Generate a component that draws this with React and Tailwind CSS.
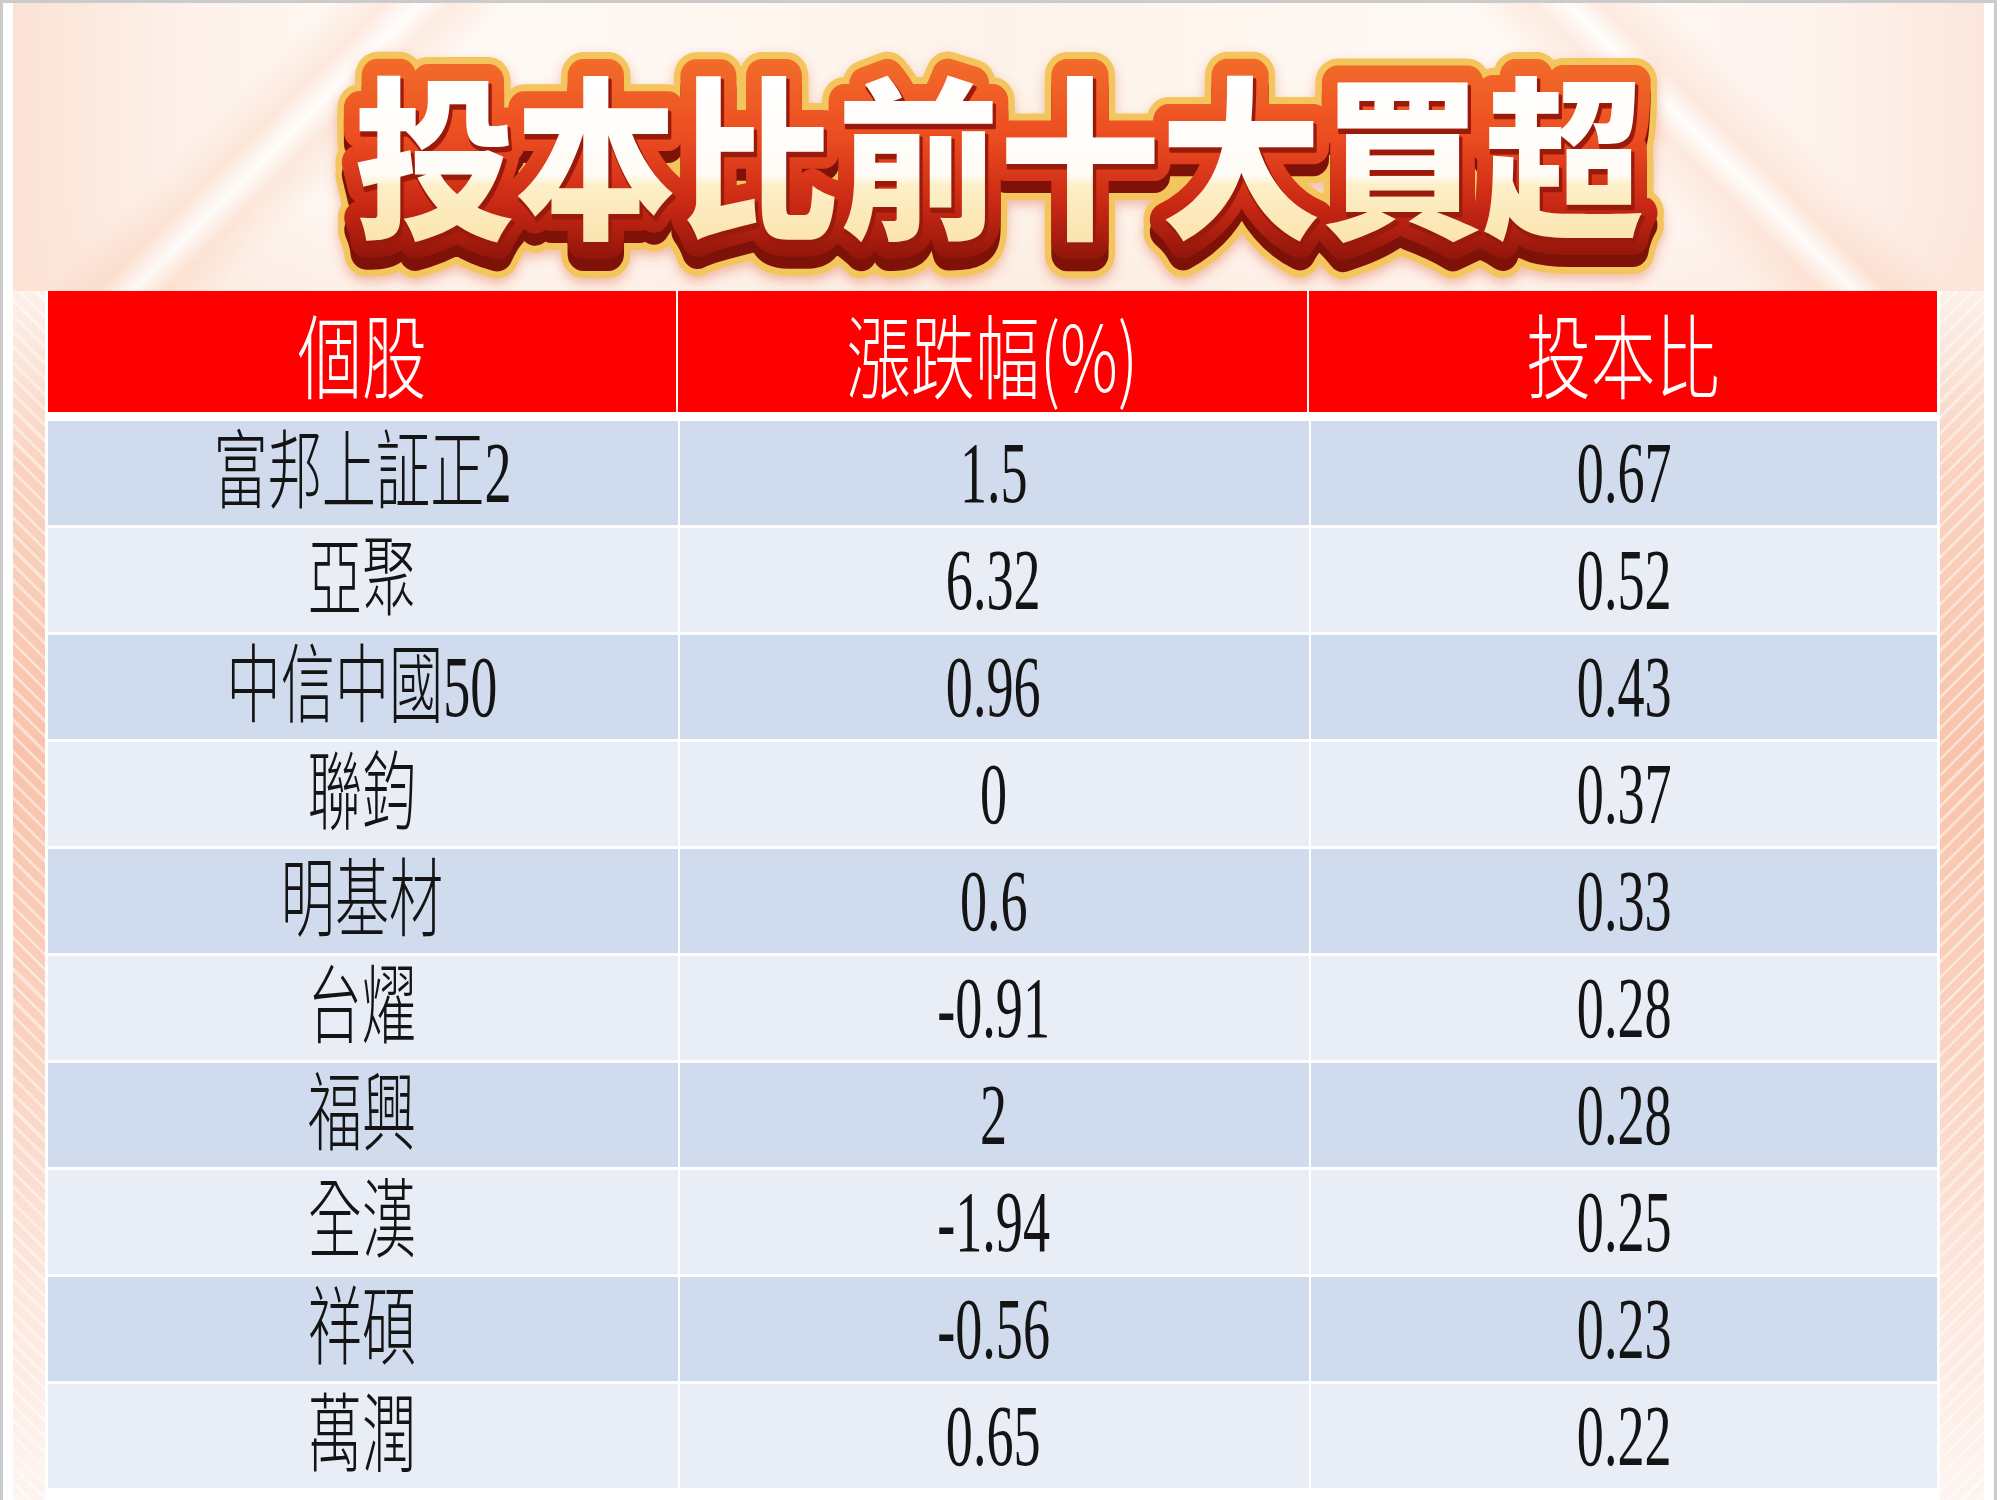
import React from "react";

const rows = [
  ["富邦上証正2", "1.5", "0.67"],
  ["亞聚", "6.32", "0.52"],
  ["中信中國50", "0.96", "0.43"],
  ["聯鈞", "0", "0.37"],
  ["明基材", "0.6", "0.33"],
  ["台燿", "-0.91", "0.28"],
  ["福興", "2", "0.28"],
  ["全漢", "-1.94", "0.25"],
  ["祥碩", "-0.56", "0.23"],
  ["萬潤", "0.65", "0.22"],
];

const TITLE = "投本比前十大買超";

const TitleText = ({ dy = 0, dx = 0, ...rest }) => (
  <text
    x={40 + dx}
    y={205 + dy}
    textLength="1290"
    lengthAdjust="spacingAndGlyphs"
    strokeLinejoin="round"
    {...rest}
  >
    {TITLE}
  </text>
);

const Title = () => {
  return (
    <svg width="1370" height="271" viewBox="0 0 1370 271" className="block">
      <defs>
        <linearGradient id="redStroke" gradientUnits="userSpaceOnUse" x1="0" y1="30" x2="0" y2="250">
          <stop offset="0" stopColor="#f3702c" />
          <stop offset="0.4" stopColor="#ec4c20" />
          <stop offset="0.7" stopColor="#c92814" />
          <stop offset="1" stopColor="#861208" />
        </linearGradient>
        <linearGradient id="faceFill" gradientUnits="userSpaceOnUse" x1="0" y1="55" x2="0" y2="222">
          <stop offset="0" stopColor="#ffffff" />
          <stop offset="0.6" stopColor="#fffcf6" />
          <stop offset="0.66" stopColor="#fdefc8" />
          <stop offset="1" stopColor="#fbe4ae" />
        </linearGradient>
        <filter id="glow" x="-5%" y="-20%" width="110%" height="140%">
          <feDropShadow dx="0" dy="5" stdDeviation="6" floodColor="#d8462a" floodOpacity="0.35" />
        </filter>
      </defs>
      <g fontFamily="'Noto Sans CJK TC', 'Noto Sans CJK SC', sans-serif" fontWeight="900" fontSize="174">
        <g filter="url(#glow)">
          <TitleText dy={12} fill="#f4c55c" stroke="#f4c55c" strokeWidth="48" />
          <TitleText fill="#f4c55c" stroke="#f4c55c" strokeWidth="48" />
        </g>
        <TitleText dy={12} fill="#7e1208" stroke="#7e1208" strokeWidth="34" />
        <TitleText fill="url(#redStroke)" stroke="url(#redStroke)" strokeWidth="34" />
        <TitleText dx={2} dy={4} fill="#9a1a0c" stroke="#9a1a0c" strokeWidth="3" />
        <TitleText fill="url(#faceFill)" />
      </g>
    </svg>
  );
};

const stripLeft =
  "[background-image:repeating-linear-gradient(45deg,rgba(255,255,255,0.45)_0px,rgba(255,255,255,0.45)_3px,rgba(255,255,255,0)_3px,rgba(255,255,255,0)_11px),linear-gradient(180deg,#fdf1ea_0%,#fad3c0_14%,#f8c3aa_38%,#fad2bf_62%,#fde6dc_82%,#fef5f0_100%)]";
const stripRight =
  "[background-image:repeating-linear-gradient(135deg,rgba(255,255,255,0.45)_0px,rgba(255,255,255,0.45)_3px,rgba(255,255,255,0)_3px,rgba(255,255,255,0)_11px),linear-gradient(180deg,#fdf1ea_0%,#fad3c0_14%,#f8c3aa_38%,#fad2bf_62%,#fde6dc_82%,#fef5f0_100%)]";

const App = () => {
  return (
    <div className="w-[2000px] h-[1500px] bg-white overflow-hidden">
      <div className="w-[1997px] h-[1500px] border-[3px] border-b-0 border-[#cbcbcb] px-[10px] flex flex-col">
        {/* title band */}
        <div className="h-[288px] flex justify-center pt-[17px] [background-image:linear-gradient(135deg,rgba(255,255,255,0)_14%,rgba(247,196,168,0.28)_16.5%,rgba(255,255,255,0.7)_18%,rgba(247,196,168,0.28)_19.5%,rgba(255,255,255,0)_22%),linear-gradient(45deg,rgba(255,255,255,0)_77%,rgba(247,196,168,0.28)_80%,rgba(255,255,255,0.7)_81.5%,rgba(247,196,168,0.28)_83%,rgba(255,255,255,0)_86%),linear-gradient(180deg,rgba(255,255,255,0)_70%,rgba(251,226,212,0.35)_100%),linear-gradient(90deg,#fbe2d5_0%,#fdf0e8_8%,#fffaf6_20%,#fdf3ea_50%,#fffaf6_78%,#fef2ec_92%,#fbe6dc_100%)]">
          <Title />
        </div>

        {/* table band */}
        <div className="flex flex-1 gap-[3px]">
          <div className={`w-[32px] ${stripLeft}`} />
          <div className="w-[1889px] bg-white flex flex-col">
            <div className="grid grid-cols-3 gap-x-[2px] h-[121px] mb-[9px]">
              {["個股", "漲跌幅(%)", "投本比"].map((h) => (
                <div key={h} className="bg-[#ff0000] flex items-center justify-center">
                  <span className="inline-block scale-x-[0.7] text-[92px] leading-none text-white font-light font-['Noto_Sans_CJK_TC','Noto_Sans_CJK_SC',sans-serif] whitespace-nowrap">
                    {h}
                  </span>
                </div>
              ))}
            </div>
            <div className="flex flex-col gap-[3px]">
              {rows.map((r, i) => (
                <div
                  key={r[0]}
                  className={`grid grid-cols-3 gap-x-[2px] h-[104px] ${i % 2 === 0 ? "bg-[#d0dbee]" : "bg-[#e9edf6]"}`}
                >
                  {r.map((c, j) => (
                    <div
                      key={j}
                      className={`flex items-center justify-center ${j > 0 ? "border-l-[2px] border-white" : ""}`}
                    >
                      <span className="inline-block scale-x-[0.63] text-[86px] leading-none text-[#141414] font-light font-['Liberation_Serif','Noto_Sans_CJK_TC','Noto_Sans_CJK_SC',serif] whitespace-nowrap">
                        {c}
                      </span>
                    </div>
                  ))}
                </div>
              ))}
            </div>
          </div>
          <div className={`flex-1 ${stripRight}`} />
        </div>
      </div>
    </div>
  );
};

export default App;
